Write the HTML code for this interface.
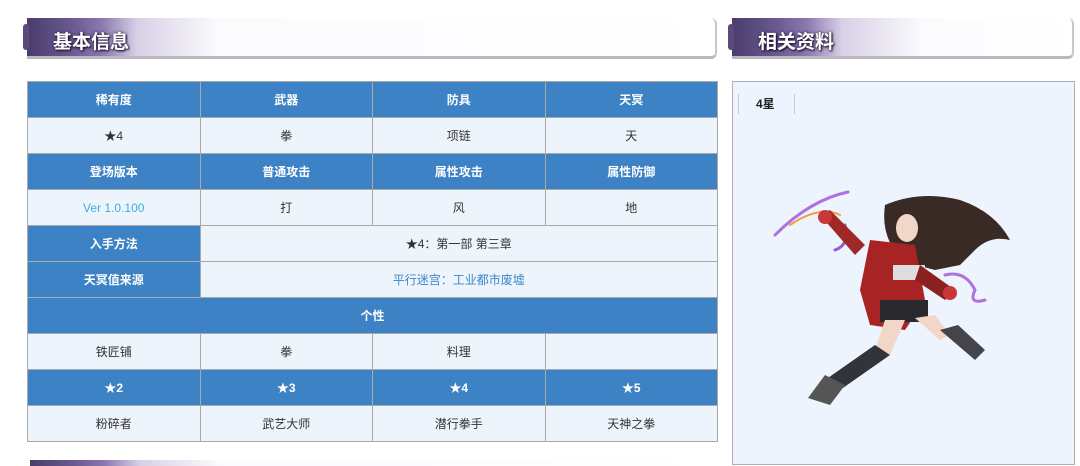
<!DOCTYPE html>
<html style="width:1080px;height:466px;overflow:hidden"><head><meta charset="utf-8"><style>
body{margin:0;width:1080px;height:466px;background:#fff;position:relative;overflow:hidden;font-family:"Liberation Sans","Noto Sans CJK SC",sans-serif;}
.hdr{position:absolute;height:38px;border-bottom:3px solid #b8b8be;border-right:2px solid #c8c8cc;border-radius:0 6px 6px 0;
background:linear-gradient(90deg,#4a3d6c 0px,#6a5a90 45px,#8a78b0 75px,#d8d0e6 110px,#fbfafd 190px,#fff 100%);}
.hdr span{position:absolute;left:26px;top:9px;color:#fff;font-weight:bold;font-size:19px;text-shadow:0 0 3px #302050,1px 1px 2px #000;}
.hdr:before{content:"";position:absolute;left:-4px;top:6px;width:6px;height:26px;background:#5a4a7a;border-radius:3px;}
.bot{position:absolute;left:30px;top:460px;width:685px;height:6px;background:linear-gradient(90deg,#4a3d6c 0px,#6a5a90 45px,#8a78b0 75px,#d8d0e6 110px,#fbfafd 190px,#fff 100%);}
table{position:absolute;left:27px;top:81px;width:691px;border-collapse:collapse;table-layout:fixed;}
td{height:35px;border:1px solid #a9a9a9;text-align:center;font-size:12px;color:#333;background:#eef4fc;padding:0;}
td.h{background:#3d82c4;color:#fff;font-weight:bold;}
.lk{color:#3a87c8;}
.panel{position:absolute;left:732px;top:81px;width:341px;height:382px;border:1px solid #b0b0b0;background:#eef4fd;}
.tab{position:absolute;left:5px;top:12px;width:57px;height:20px;border-left:1px solid #ccc;border-right:1px solid #ccc;font-size:12px;font-weight:bold;line-height:20px;padding-left:17px;box-sizing:border-box;color:#222;}
</style></head><body>
<div class="hdr" style="left:27px;top:18px;width:688px;"><span>基本信息</span></div>
<div class="hdr" style="left:732px;top:18px;width:340px;"><span>相关资料</span></div>
<div class="bot"></div>
<table>
<tr><td class="h">稀有度</td><td class="h">武器</td><td class="h">防具</td><td class="h">天冥</td></tr>
<tr><td>★4</td><td>拳</td><td>项链</td><td>天</td></tr>
<tr><td class="h">登场版本</td><td class="h">普通攻击</td><td class="h">属性攻击</td><td class="h">属性防御</td></tr>
<tr><td style="color:#3bb0e0">Ver 1.0.100</td><td>打</td><td>风</td><td>地</td></tr>
<tr><td class="h">入手方法</td><td colspan="3">★4：第一部 第三章</td></tr>
<tr><td class="h">天冥值来源</td><td colspan="3" class="lk">平行迷宫：工业都市废墟</td></tr>
<tr><td class="h" colspan="4">个性</td></tr>
<tr><td>铁匠铺</td><td>拳</td><td>料理</td><td></td></tr>
<tr><td class="h">★2</td><td class="h">★3</td><td class="h">★4</td><td class="h">★5</td></tr>
<tr><td>粉碎者</td><td>武艺大师</td><td>潜行拳手</td><td>天神之拳</td></tr>
</table>
<div class="panel"><div class="tab">4星</div></div>
<svg style="position:absolute;left:0;top:0" width="1080" height="466">
<g fill="none" stroke-linecap="round">
<path d="M775 235 Q810 200 848 192" stroke="#b070e0" stroke-width="3"/>
<path d="M790 225 Q820 205 840 215" stroke="#f0a040" stroke-width="2"/>
<path d="M835 250 Q850 245 845 225" stroke="#9060d0" stroke-width="3"/>
<path d="M945 275 Q965 270 975 290 Q968 305 985 300" stroke="#b070e0" stroke-width="3"/>
</g>
<path d="M885 205 Q920 190 960 200 Q995 212 1010 240 Q990 235 975 250 L960 265 L935 270 L905 262 Q880 240 885 205Z" fill="#3a2a26"/>
<ellipse cx="907" cy="228" rx="11" ry="14" fill="#f2d6c8"/>
<path d="M820 215 L830 210 L865 245 L855 255Z" fill="#a02828"/>
<circle cx="825" cy="217" r="7" fill="#c83838"/>
<path d="M870 240 L915 245 L925 300 L905 330 L870 325 L860 290Z" fill="#a82424"/>
<rect x="893" y="265" width="32" height="15" fill="#ddd"/>
<path d="M920 265 L955 290 L945 300 L915 280Z" fill="#8a2020"/>
<circle cx="950" cy="293" r="7" fill="#c83838"/>
<rect x="880" y="300" width="48" height="22" fill="#2a2a2e"/>
<path d="M885 320 L905 320 L890 355 L875 350Z" fill="#f2d6c8"/>
<path d="M915 318 L935 315 L950 335 L940 340Z" fill="#f2d6c8"/>
<path d="M875 345 L890 355 L840 390 L825 380Z" fill="#33333a"/>
<path d="M825 375 L845 385 L830 405 L808 398Z" fill="#555"/>
<path d="M940 330 L958 325 L985 350 L975 360Z" fill="#44444a"/>
</svg>
</body></html>
